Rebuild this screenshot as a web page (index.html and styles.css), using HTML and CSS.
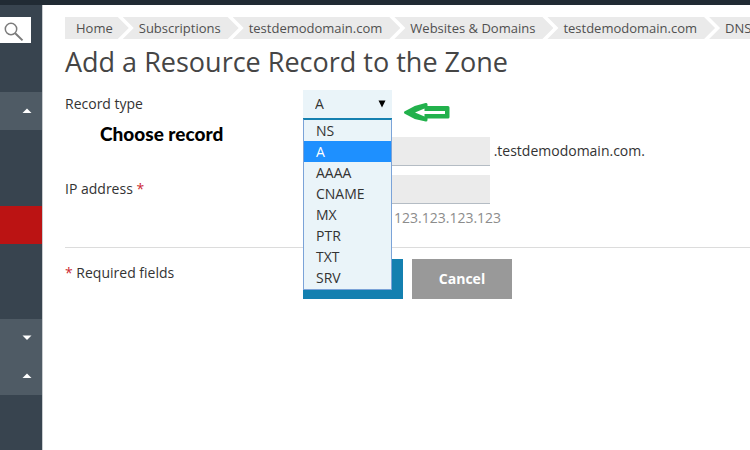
FILE: index.html
```html
<!DOCTYPE html>
<html lang="en">
<head>
<meta charset="utf-8">
<title>Add a Resource Record to the Zone</title>
<link rel="stylesheet" href="styles.css">
</head>
<body>
<header class="topbar"></header>
<div class="shell">
  <nav class="sidebar" aria-label="Main">
    <button class="search" type="button" aria-label="Search">
      <svg width="20" height="20" viewBox="0 0 20 20" fill="none" stroke="#7b7b7b"><circle cx="7" cy="7" r="5.7" stroke-width="1.5"/><path d="M11.2 11.2L18.5 18.4" stroke-width="2"/></svg>
    </button>
    <button class="group group-first" type="button" aria-label="Collapse group">
      <svg width="10" height="6" viewBox="0 0 10 6"><path d="M0.5 5L5 0.5L9.5 5Z" fill="#fff"/></svg>
    </button>
    <a class="current" href="#" aria-label="Current section"></a>
    <button class="group group-next" type="button" aria-label="Expand group">
      <svg width="10" height="6" viewBox="0 0 10 6"><path d="M0.5 0.5L5 5L9.5 0.5Z" fill="#fff"/></svg>
    </button>
    <button class="group" type="button" aria-label="Collapse group">
      <svg width="10" height="6" viewBox="0 0 10 6"><path d="M0.5 5L5 0.5L9.5 5Z" fill="#fff"/></svg>
    </button>
  </nav>
  <main class="content">
    <nav class="crumbs" aria-label="Breadcrumb">
      <a href="#">Home</a>
      <a href="#">Subscriptions</a>
      <a href="#">testdemodomain.com</a>
      <a href="#">Websites &amp; Domains</a>
      <a href="#">testdemodomain.com</a>
      <a href="#">DNS</a>
    </nav>
    <h1>Add a Resource Record to the Zone</h1>
    <form>
      <div class="row">
        <label for="type">Record type</label>
        <div class="field picker">
          <select id="type">
            <option>NS</option><option selected>A</option><option>AAAA</option><option>CNAME</option><option>MX</option><option>PTR</option><option>TXT</option><option>SRV</option>
          </select>
          <svg class="caret" width="8" height="8" viewBox="0 0 8 8"><path d="M0.5 0.5H7.5L4 7.5Z" fill="#000"/></svg>
          <ul class="options" role="listbox" aria-label="Record type">
            <li role="option">NS</li>
            <li role="option" class="selected" aria-selected="true">A</li>
            <li role="option">AAAA</li>
            <li role="option">CNAME</li>
            <li role="option">MX</li>
            <li role="option">PTR</li>
            <li role="option">TXT</li>
            <li role="option">SRV</li>
          </ul>
          <svg class="pointer" width="48" height="22" viewBox="0 0 48 22"><path d="M2.500 11.500L12 6.500L23 3.500V6.500H45V16H23V19L12 16.500Z" fill="#22b14c" stroke="#22b14c" stroke-width="3" stroke-linejoin="round"/><path d="M12 11.500L21.500 7.500V10H42V13H21.500V15.500Z" fill="#fff"/></svg>
        </div>
      </div>
      <div class="row row-name">
        <span class="note">Choose record</span>
        <div class="field">
          <input id="name" type="text" aria-label="Domain name">
          <span class="suffix">.testdemodomain.com.</span>
        </div>
      </div>
      <div class="row row-ip">
        <label for="ip">IP address <span class="req">*</span></label>
        <div class="field">
          <input id="ip" type="text">
          <p class="hint">123.123.123.123</p>
        </div>
      </div>
      <div class="row actions">
        <p><span class="req">*</span> Required fields</p>
        <div class="buttons">
          <button class="ok" type="submit" aria-label="OK"></button>
          <button class="cancel" type="button">Cancel</button>
        </div>
      </div>
    </form>
  </main>
</div>
</body>
</html>
```
FILE: styles.css
```css
* { box-sizing: border-box; }

body {
  margin: 0;
  min-height: 100vh;
  display: flex;
  flex-direction: column;
  overflow-x: hidden;
  background: #fff;
  color: #333;
  font: 14px/20px "Open Sans", sans-serif;
}

h1, p, ul { margin: 0; }

button, input, select { font: inherit; border: 0; border-radius: 0; }

.topbar { height: 5px; background: #212b34; }

.shell { flex: 1; display: flex; }

.sidebar {
  flex: 0 0 42px;
  display: flex;
  flex-direction: column;
  padding-top: 12px;
  background: #38444f;
}

.search {
  width: 31px;
  height: 26px;
  padding: 3px 0 0 4px;
  background: #fff;
}

.search svg { display: block; }

.group {
  height: 38px;
  padding: 0 10px 0 0;
  display: flex;
  align-items: center;
  justify-content: flex-end;
  background: #4f5b65;
}

.group-first { margin-top: 49px; }
.group-next { margin-top: 75px; }

.current { height: 38px; margin-top: 76px; background: #bb1313; }

.content {
  flex: 1;
  min-width: 0;
  padding: 12px 0 0 22px;
  border-left: 1px solid #c9cdd0;
}

.crumbs { display: flex; overflow: hidden; font-size: 13px; }

.crumbs a {
  flex: none;
  height: 22px;
  padding: 0 18px 0 16px;
  margin-right: -6px;
  line-height: 22px;
  color: #505050;
  text-decoration: none;
  background: #eaeaea;
  clip-path: polygon(0 0, calc(100% - 11px) 0, 100% 50%, calc(100% - 11px) 100%, 0 100%, 11px 50%);
}

.crumbs a:first-child {
  padding: 0 16px 0 11px;
  clip-path: polygon(0 0, calc(100% - 11px) 0, 100% 50%, calc(100% - 11px) 100%, 0 100%);
}

.crumbs a:last-child {
  flex: 1 0 auto;
  margin-right: 0;
  padding-right: 0;
  clip-path: polygon(0 0, 100% 0, 100% 100%, 0 100%, 11px 50%);
}

h1 {
  margin: 5px 0 10px;
  font-size: 27px;
  line-height: 36px;
  font-weight: 400;
  color: #454545;
}

.row { display: grid; grid-template-columns: 238px 1fr; }

.row > label, .row > p { padding-top: 4px; }

.field { position: relative; }

.picker { height: 47px; }

select {
  display: block;
  width: 89px;
  height: 30px;
  padding: 0 12px;
  appearance: none;
  color: #333;
  background: #eaf4f9;
  border-bottom: 2px solid #1580b0;
}

.caret { position: absolute; left: 75px; top: 10px; }

.options {
  position: absolute;
  z-index: 1;
  left: 0;
  top: 29px;
  width: 89px;
  padding: 0 0 1px;
  list-style: none;
  background: #eaf4f9;
  border: 1px solid #7ba3d8;
  border-top-color: #1580b0;
}

.options li { padding-left: 12px; line-height: 21px; }

.options .selected { color: #fff; background: #1e90ff; }

.pointer { position: absolute; left: 100px; top: 11px; }

.note {
  margin-top: -13px;
  padding-left: 35px;
  font: 900 19px/20px Lato, sans-serif;
  color: #000;
}

input {
  width: 187px;
  height: 29px;
  padding: 0 8px;
  vertical-align: top;
  background: #ebebeb;
  border-bottom: 1px solid #b4bcc4;
}

.suffix { display: inline-block; line-height: 28px; }

.row-name { height: 38px; }

.row-ip { height: 72px; }

.hint { margin-top: 4px; padding-left: 91px; color: #8c8c8c; }

.req { color: #cc2b32; }

.actions { padding-top: 11px; border-top: 1px solid #dcdcdc; }

.buttons { display: flex; gap: 9px; }

.buttons button { width: 100px; height: 40px; color: #fff; font-weight: 700; }

.ok { background: #1480b0; }

.cancel { background: #999; }
```
